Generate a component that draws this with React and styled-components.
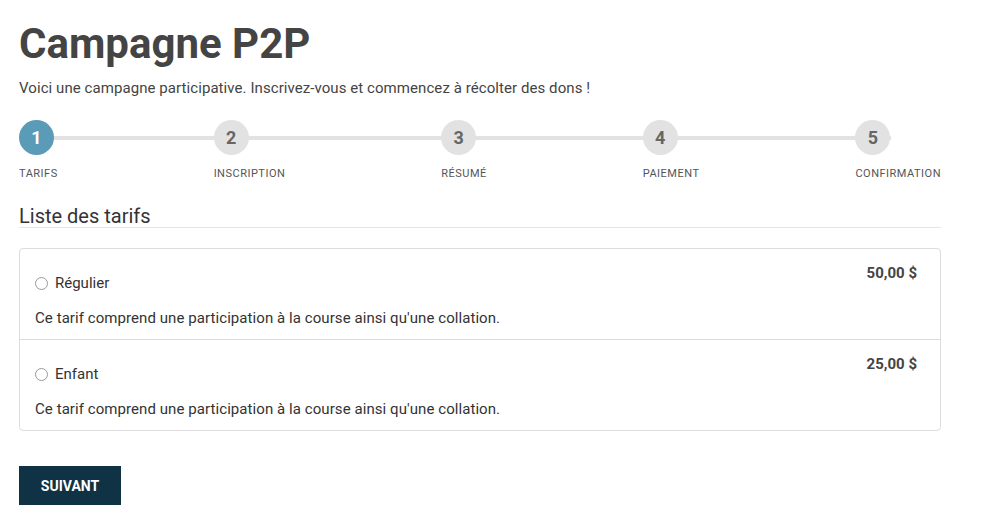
import styled, { createGlobalStyle } from 'styled-components';

const GlobalStyle = createGlobalStyle`
  body {
    margin: 0;
    background: #fff;
    font-family: Roboto, "Liberation Sans", sans-serif;
    color: #444;
  }
`;

const Page = styled.div`
  width: 922px;
  padding: 19px 0 24px 19px;
`;

const Title = styled.h1`
  margin: 0;
  font-size: 42px;
  line-height: 50px;
  font-weight: 700;
  color: #444;
`;

const Intro = styled.p`
  margin: 9px 0 0;
  font-size: 15px;
  line-height: 20px;
  letter-spacing: 0.07px;
  color: #444;
`;

const Stepper = styled.ol`
  position: relative;
  display: flex;
  justify-content: space-between;
  list-style: none;
  margin: 22px 0 0;
  padding: 0;

  &::before {
    content: '';
    position: absolute;
    left: 17px;
    right: 50px;
    top: 16px;
    height: 4px;
    background: #e2e2e2;
  }
`;

const Step = styled.li`
  position: relative;
  display: flex;
  flex-direction: column;
  align-items: flex-start;
`;

const Bubble = styled.span`
  width: 35px;
  height: 35px;
  border-radius: 50%;
  display: flex;
  align-items: center;
  justify-content: center;
  font-size: 18px;
  font-weight: 700;
  background: ${(p) => (p.$active ? '#5a9bb8' : '#e2e2e2')};
  color: ${(p) => (p.$active ? '#fff' : '#666')};
`;

const StepLabel = styled.span`
  margin-top: 12px;
  font-size: 11px;
  line-height: 14px;
  letter-spacing: 0.5px;
  text-transform: uppercase;
  color: #555;
`;

const SectionTitle = styled.h2`
  margin: 24px 0 0;
  padding: 0;
  font-size: 20px;
  line-height: 22px;
  font-weight: 400;
  color: #333;
  border-bottom: 1px solid #e4e4e4;
`;

const RateList = styled.div`
  margin-top: 20px;
  border: 1px solid #dcdcdc;
  border-radius: 4px;
`;

const Rate = styled.div`
  display: flex;
  justify-content: space-between;
  padding: 14px 23px 11px 15px;
  & + & {
    border-top: 1px solid #dcdcdc;
  }
`;

const RateBody = styled.div`
  padding-top: 10px;
`;

const RadioLabel = styled.label`
  display: flex;
  align-items: center;
  gap: 7px;
  font-size: 15px;
  line-height: 20px;
  color: #333;
`;

const Radio = styled.span`
  width: 11px;
  height: 11px;
  border: 1px solid #999;
  border-radius: 50%;
  background: #fff;
`;

const Description = styled.p`
  margin: 15px 0 0;
  font-size: 15px;
  line-height: 20px;
  letter-spacing: 0.07px;
  color: #333;
`;

const Price = styled.span`
  font-size: 15px;
  line-height: 20px;
  font-weight: 700;
  color: #444;
`;

const NextButton = styled.button`
  margin-top: 35px;
  width: 102px;
  height: 39px;
  border: none;
  border-radius: 0;
  background: #0f3344;
  color: #fff;
  font-family: inherit;
  font-size: 14px;
  font-weight: 700;
  text-transform: uppercase;
  cursor: pointer;
`;

const steps = ['Tarifs', 'Inscription', 'Résumé', 'Paiement', 'Confirmation'];

const rates = [
  { name: 'Régulier', price: '50,00 $' },
  { name: 'Enfant', price: '25,00 $' },
];

export default function App() {
  return (
    <Page>
      <GlobalStyle />
      <Title>Campagne P2P</Title>
      <Intro>Voici une campagne participative. Inscrivez-vous et commencez à récolter des dons !</Intro>
      <Stepper>
        {steps.map((step, i) => (
          <Step key={step}>
            <Bubble $active={i === 0}>{i + 1}</Bubble>
            <StepLabel>{step}</StepLabel>
          </Step>
        ))}
      </Stepper>
      <SectionTitle>Liste des tarifs</SectionTitle>
      <RateList>
        {rates.map((rate) => (
          <Rate key={rate.name}>
            <RateBody>
              <RadioLabel>
                <Radio />
                {rate.name}
              </RadioLabel>
              <Description>Ce tarif comprend une participation à la course ainsi qu'une collation.</Description>
            </RateBody>
            <Price>{rate.price}</Price>
          </Rate>
        ))}
      </RateList>
      <NextButton>Suivant</NextButton>
    </Page>
  );
}
